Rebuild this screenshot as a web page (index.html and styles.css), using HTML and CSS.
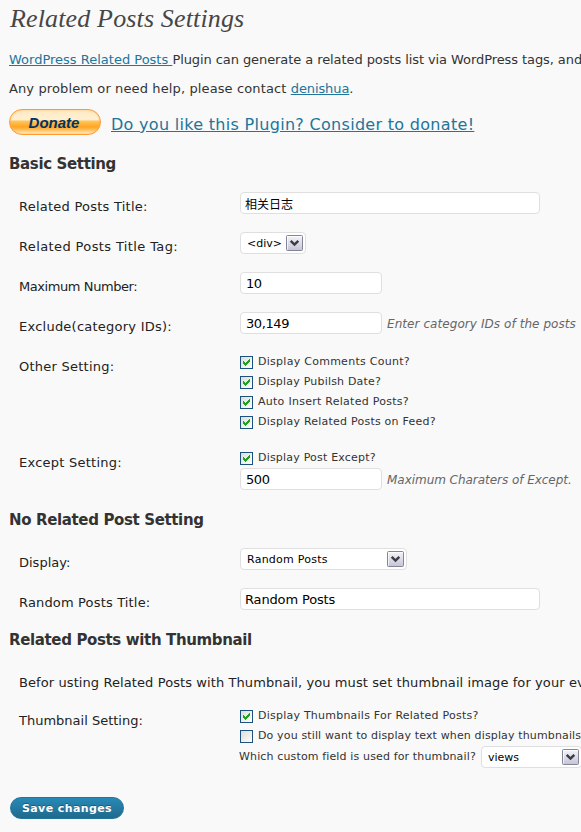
FILE: index.html
```html
<!DOCTYPE html>
<html lang="en">
<head>
<meta charset="utf-8">
<title>Related Posts Settings</title>
<link rel="stylesheet" href="styles.css">
</head>
<body>
<svg width="0" height="0" class="defs">
  <defs>
    <linearGradient id="arrowFill" x1="0" y1="0" x2="0" y2="1"><stop offset="0" stop-color="#f6f6fa"/><stop offset="1" stop-color="#c3c3d6"/></linearGradient>
    <linearGradient id="checkFill" x1="0" y1="0" x2="1" y2="1"><stop offset="0" stop-color="#dcdcd7"/><stop offset="1" stop-color="#ffffff"/></linearGradient>
    <symbol id="arrow" viewBox="0 0 17 16">
      <rect x=".5" y=".5" width="16" height="15" rx="1" fill="url(#arrowFill)" stroke="#85859a"/>
      <path d="M1.5 14.500V1.500H15.500" fill="none" stroke="#fff" stroke-opacity=".7"/>
      <path d="M4.700 5.900 8.500 9.600 12.300 5.900" fill="none" stroke="#3c3c46" stroke-width="2.500"/>
    </symbol>
    <symbol id="box" viewBox="0 0 13 13"><rect x=".5" y=".5" width="12" height="12" fill="url(#checkFill)" stroke="#1c5180"/></symbol>
    <symbol id="check" viewBox="0 0 13 13"><path d="M3 5H4V6H5V7H6V6H7V5H8V4H9V3H10V6H9V7H8V8H7V9H6V10H5V9H4V8H3Z" fill="#21a121"/></symbol>
  </defs>
</svg>
<main class="wrap">
  <h2>Related Posts Settings</h2>
  <p class="intro"><a href="#">WordPress Related Posts </a>Plugin can generate a related posts list via WordPress tags, and</p>
  <p class="contact">Any problem or need help, please contact <a href="#">denishua</a>.</p>
  <div class="donate"><button class="paypal" type="button">Donate</button><a href="#">Do you like this Plugin? Consider to donate!</a></div>

  <h3 class="h-basic">Basic Setting</h3>
  <div class="row"><label class="l1">Related Posts Title:</label><div class="field"><input class="text wide cjk" value="相关日志"></div></div>
  <div class="row"><label class="l2">Related Posts Title Tag:</label><div class="field"><div class="select tag"><span>&lt;div&gt;</span><svg><use href="#arrow"/></svg></div></div></div>
  <div class="row"><label class="l3">Maximum Number:</label><div class="field"><input class="text" value="10"></div></div>
  <div class="row"><label class="l4">Exclude(category IDs):</label><div class="field"><input class="text" value="30,149"><em class="d1">Enter category IDs of the posts</em></div></div>
  <div class="row other"><label class="l5">Other Setting:</label><div class="checks">
    <div class="check"><svg><use href="#box"/><use href="#check"/></svg><span class="c1">Display Comments Count?</span></div>
    <div class="check"><svg><use href="#box"/><use href="#check"/></svg><span class="c2">Display Pubilsh Date?</span></div>
    <div class="check"><svg><use href="#box"/><use href="#check"/></svg><span class="c1">Auto Insert Related Posts?</span></div>
    <div class="check"><svg><use href="#box"/><use href="#check"/></svg><span class="c4">Display Related Posts on Feed?</span></div>
  </div></div>
  <div class="row except"><label class="l6">Except Setting:</label><div class="checks">
    <div class="check"><svg><use href="#box"/><use href="#check"/></svg><span class="c2">Display Post Except?</span></div>
    <div class="field limit"><input class="text" value="500"><em class="d2">Maximum Charaters of Except.</em></div>
  </div></div>

  <h3 class="h-none">No Related Post Setting</h3>
  <div class="row"><label class="l7">Display:</label><div class="field"><div class="select mode"><span>Random Posts</span><svg><use href="#arrow"/></svg></div></div></div>
  <div class="row"><label class="l8">Random Posts Title:</label><div class="field"><input class="text wide" value="Random Posts"></div></div>

  <h3 class="h-thumb">Related Posts with Thumbnail</h3>
  <p class="note">Befor usting Related Posts with Thumbnail, you must set thumbnail image for your ev</p>
  <div class="row thumb"><label class="l9">Thumbnail Setting:</label><div class="checks">
    <div class="check"><svg><use href="#box"/><use href="#check"/></svg><span class="c4">Display Thumbnails For Related Posts?</span></div>
    <div class="check"><svg><use href="#box"/></svg><span class="c7">Do you still want to display text when display thumbnails</span></div>
    <div class="custom"><span class="c7">Which custom field is used for thumbnail?</span><div class="select views"><span>views</span><svg><use href="#arrow"/></svg></div></div>
  </div></div>
  <button class="save" type="button">Save changes</button>
</main>
</body>
</html>
```
FILE: styles.css
```css
* { box-sizing: border-box; margin: 0; padding: 0; }
body { width: 581px; height: 832px; overflow: hidden; background: #f9f9f9; color: #333; font: 13px/20px "DejaVu Sans", Verdana, sans-serif; white-space: nowrap; }
.defs { display: block; }
.wrap { width: 581px; height: 832px; overflow: hidden; padding-left: 9px; }
a { color: #21759b; text-decoration: underline; }
h2 { height: 38px; padding-left: 1px; color: #464646; font: italic 26px/38px "Liberation Serif", Georgia, serif; letter-spacing: 0.15px; }
.intro { height: 20px; margin-top: 12px; letter-spacing: -0.08px; }
.intro a { letter-spacing: 0; }
.contact { height: 20px; margin-top: 9px; letter-spacing: 0.12px; }
.contact a { letter-spacing: -0.1px; }
.donate { display: flex; height: 26px; margin-top: 10px; gap: 10px; }
.donate a { font-size: 16px; line-height: 32px; letter-spacing: 0.3px; }
.paypal { width: 92px; height: 26px; padding-right: 2px; border: 1px solid #ff9933; border-radius: 13px; color: #003366; font: italic bold 15px/23px "Liberation Sans", Arial, sans-serif; background: linear-gradient(#ffe9c0 0, #fff0d4 40%, #ffc45a 47%, #ffa522 70%, #ffb84c 80%, #fff0c8 100%); box-shadow: inset 0 0 2px #ffb95d; }
h3 { height: 24px; font-size: 15px; line-height: 24px; letter-spacing: -0.36px; color: #333; }
.h-basic { margin: 17px 0 10px; }
.h-none { margin: 10px 0 10px; }
.h-thumb { margin: 6px 0 0; }
.row { display: grid; grid-template-columns: 221px 1fr; height: 40px; padding-left: 10px; color: #222; }
.row label { padding-top: 11px; }
.l1, .l4, .l5, .l6 { letter-spacing: 0.24px; }
.l2 { letter-spacing: 0.38px; }
.l3 { letter-spacing: -0.42px; }
.l8 { letter-spacing: 0.16px; }
.field { display: flex; align-items: flex-start; padding-top: 6px; gap: 5px; }
.text { width: 142px; height: 22px; padding: 1px 0 0 5px; border: 1px solid #dfdfdf; border-radius: 4px; background: #fff; color: #000; font: 13px "DejaVu Sans", Verdana, sans-serif; letter-spacing: -0.4px; }
.wide { width: 300px; padding-left: 4px; letter-spacing: -0.15px; }
.cjk { font: 12px "Noto Sans CJK SC", sans-serif; letter-spacing: 0; }
em { color: #666; font-size: 12px; line-height: 25px; }
.d1 { letter-spacing: 0.07px; }
.d2 { letter-spacing: -0.04px; }
.select { display: flex; justify-content: space-between; height: 22px; padding: 2px 2px 0 6px; border: 1px solid #dfdfdf; border-radius: 4px; background: #fff; color: #000; font-size: 11px; line-height: 17px; }
.select svg { width: 17px; height: 16px; }
.tag { width: 66px; }
.mode { width: 167px; letter-spacing: 0.25px; }
.views { width: 101px; }
.other { height: 96px; }
.except { height: 56px; }
.checks { padding-top: 5px; font-size: 11px; color: #333; }
.check { display: flex; height: 20px; gap: 5px; line-height: 22px; }
.check svg { width: 13px; height: 13px; margin-top: 5px; }
.c1 { letter-spacing: 0.27px; }
.c2 { letter-spacing: 0.2px; }
.c4 { letter-spacing: 0.23px; }
.c7 { letter-spacing: 0.14px; }
.limit { padding-top: 1px; }
.note { height: 20px; margin-top: 21px; padding-left: 10px; color: #222; letter-spacing: 0.09px; }
.thumb { height: 70px; margin-top: 7px; }
.custom { display: flex; gap: 5px; margin: 1px 0 0 -1px; line-height: 22px; }
.save { display: block; width: 114px; height: 22px; margin: 27px 0 0 1px; border: 1px solid #21759b; border-radius: 11px; background: linear-gradient(#278ab7, #21698c); color: #fff; font: bold 11px/19px "DejaVu Sans", Verdana, sans-serif; letter-spacing: 0.4px; text-shadow: 0 -1px 0 rgba(0,0,0,.3); }
```
